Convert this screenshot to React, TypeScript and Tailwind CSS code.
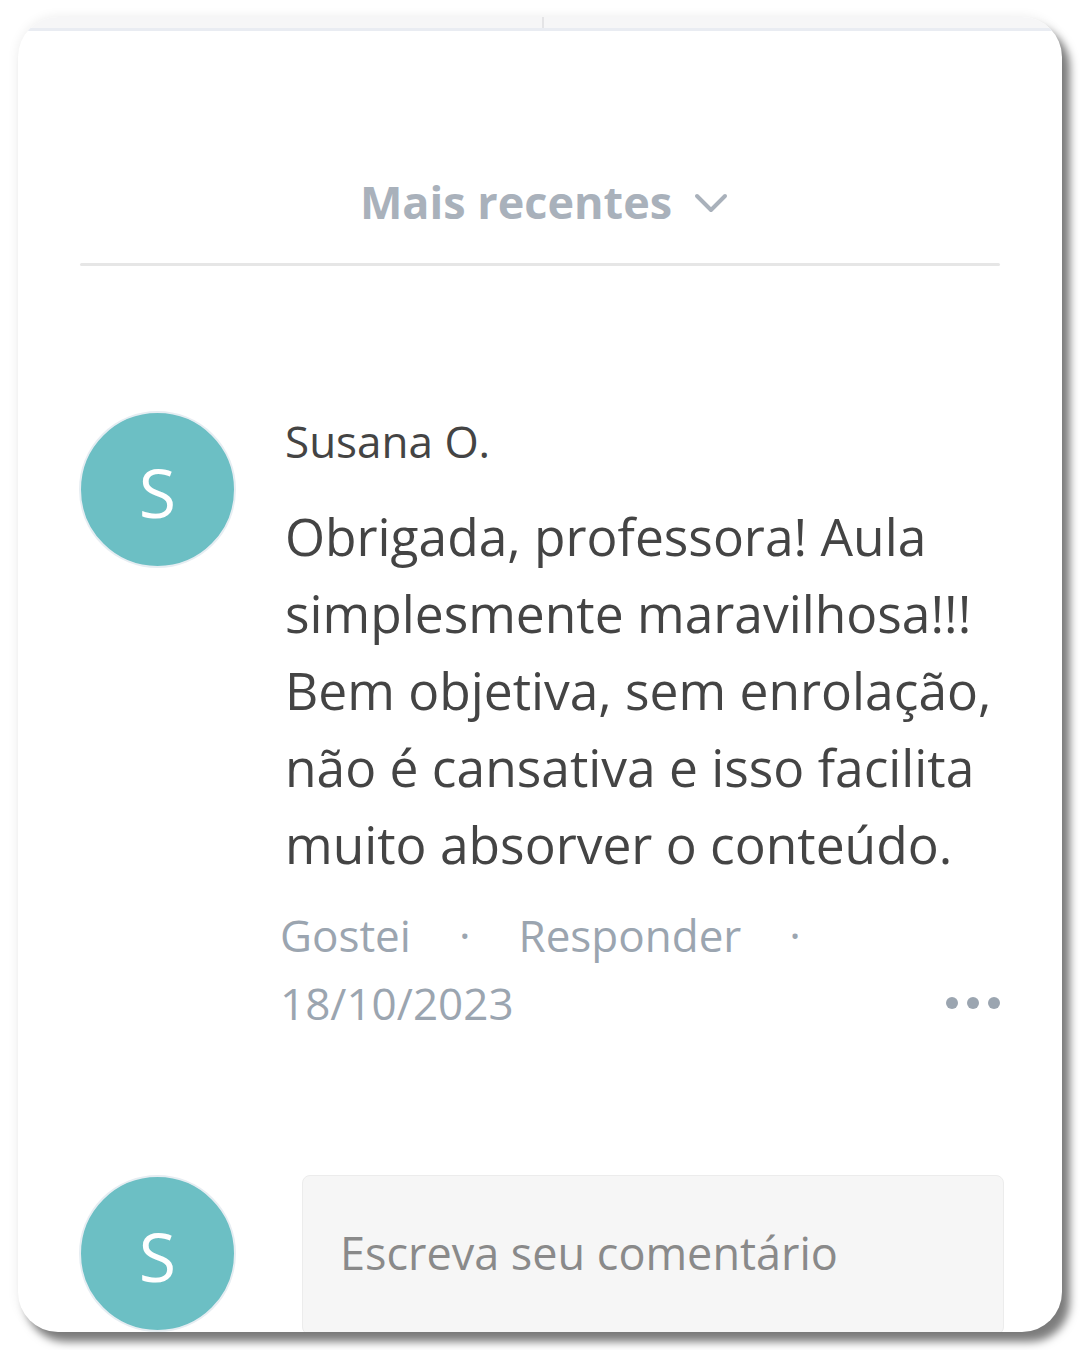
export default function App() {
  const font = { fontFamily: '"Open Sans", "Noto Sans", sans-serif' };

  return (
    <div className="min-h-[1350px] w-[1080px] bg-white pt-[17px] pl-[18px]" style={font}>
      <div className="w-[1044px] h-[1315px] rounded-[40px] overflow-hidden bg-white shadow-[8px_10px_9px_rgba(0,0,0,0.5),0_0_12px_rgba(0,0,0,0.08)]">
        {/* cut-off tabs at the top */}
        <div className="flex h-[14px] border-b-[3px] border-[#e9ecf2]">
          <div className="w-[524px] bg-[#f6f6f7]" />
          <div className="w-[2px] bg-[#e4e4e6]" />
          <div className="flex-1 bg-[#f6f6f7]" />
        </div>

        <div className="px-[62px]">
          {/* sort selector */}
          <div className="mt-[138px] h-[64px] flex items-center justify-center gap-[22px] pl-[8px] text-[#a9b1bb]">
            <span className="text-[45px] font-bold leading-none">Mais recentes</span>
            <svg width="34" height="22" viewBox="0 0 34 22" fill="none" className="mt-[4px]">
              <path d="M3 4 L17 18 L31 4" stroke="#a9b1bb" strokeWidth="4" strokeLinecap="round" strokeLinejoin="round" />
            </svg>
          </div>
          <div className="mt-[30px] h-[3px] rounded-full bg-[#e6e6e6]" />

          {/* comment */}
          <div className="mt-[145px] flex gap-[49px]">
            <div className="shrink-0 w-[157px] h-[157px] -ml-[1px] rounded-full bg-[#6cbfc4] border-2 border-[#e6edf2] flex items-center justify-center">
              <span className="text-white text-[68px] leading-none mt-[4px]">S</span>
            </div>
            <div className="flex-1 min-w-0">
              <div className="text-[44px] leading-[60px] text-[#444]">Susana O.</div>
              <p className="mt-[27px] text-[51.5px] leading-[77px] text-[#444]">
                Obrigada, professora! Aula simplesmente maravilhosa!!! Bem objetiva, sem enrolação, não é cansativa e isso facilita muito absorver o conteúdo.
              </p>
              <div className="mt-[18px] -ml-[5px] flex items-end text-[44px] leading-[68px] text-[#9ba5b0]">
                <div className="flex-1 flex flex-wrap items-center gap-x-[48px]">
                  <span>Gostei</span>
                  <span>·</span>
                  <span>Responder</span>
                  <span>·</span>
                  <span>18/10/2023</span>
                </div>
                <div className="h-[68px] flex items-center gap-[9px]">
                  <span className="w-[12px] h-[12px] rounded-full bg-[#9ba5b0]" />
                  <span className="w-[12px] h-[12px] rounded-full bg-[#9ba5b0]" />
                  <span className="w-[12px] h-[12px] rounded-full bg-[#9ba5b0]" />
                </div>
              </div>
            </div>
          </div>
        </div>

        {/* new comment */}
        <div className="mt-[138px] pl-[61px] pr-[58px] flex gap-[66px]">
          <div className="shrink-0 w-[157px] h-[157px] rounded-full bg-[#6cbfc4] border-2 border-[#e6edf2] flex items-center justify-center">
            <span className="text-white text-[68px] leading-none mt-[4px]">S</span>
          </div>
          <div className="flex-1 h-[160px] rounded-[8px] bg-[#f6f6f6] border border-[#ececec] flex items-center pl-[37px] pb-[4px]">
            <span className="text-[45px] text-[#8a8a8a]">Escreva seu comentário</span>
          </div>
        </div>
      </div>
    </div>
  );
}
